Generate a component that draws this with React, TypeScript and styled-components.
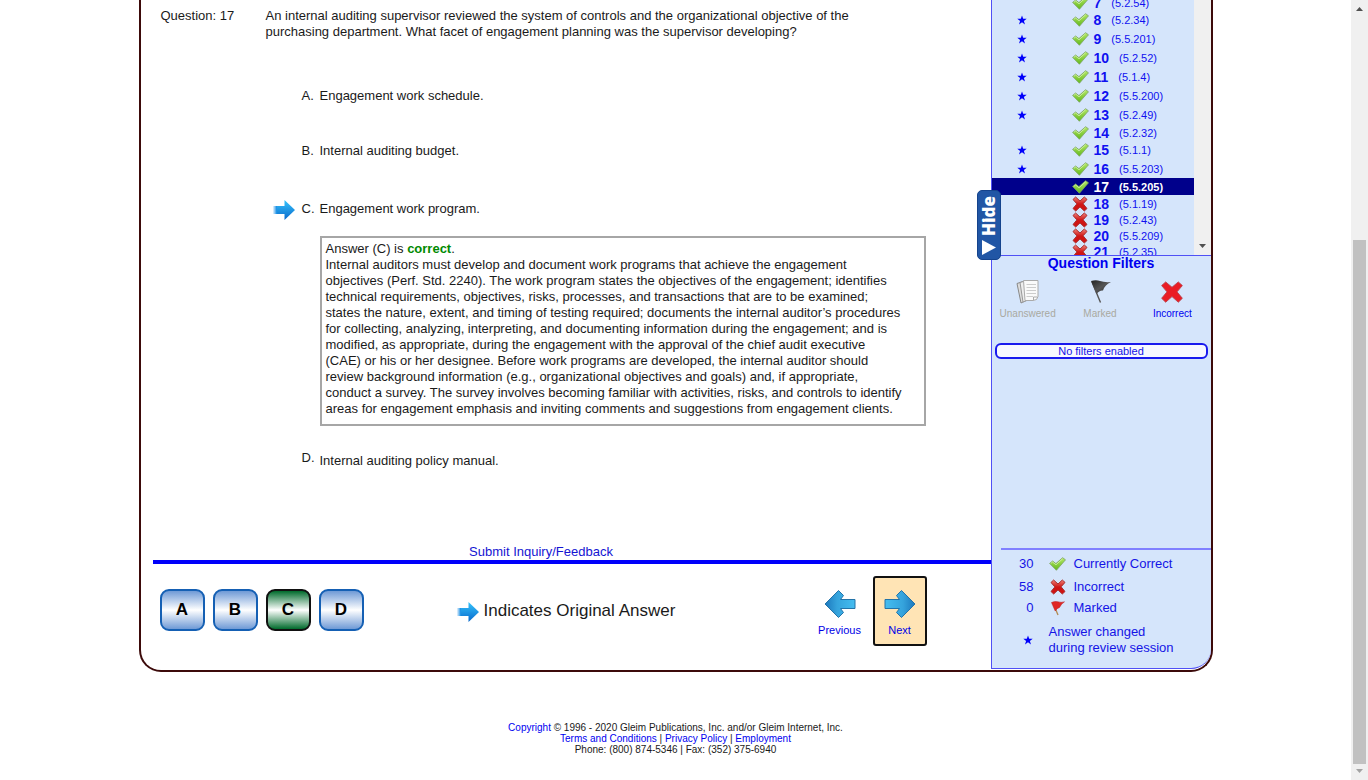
import React from "react";
import styled, { createGlobalStyle, css } from "styled-components";

const GlobalStyle = createGlobalStyle`
  * { box-sizing: border-box; }
  body {
    margin: 0;
    background: #fff;
    color: #1a1a1a;
    font: 13px/16px "Liberation Sans", Arial, sans-serif;
  }
  button { font: inherit; color: inherit; background: none; border: 0; padding: 0; cursor: pointer; }
  a { color: #1414d2; text-decoration: none; }
  p, h2, ul, ol { margin: 0; padding: 0; list-style: none; font-weight: normal; }
  svg { display: block; flex: none; }
`;

const Page = styled.div`
  display: grid;
  grid-template-columns: minmax(0, 1fr) 17px;
  min-height: 100vh;
`;

const Column = styled.div`
  display: flex;
  flex-direction: column;
  align-items: center;
`;

const Card = styled.div`
  display: flex;
  width: 100%;
  max-width: 1074px;
  border: 2px solid #3c0a0a;
  border-top: 0;
  border-radius: 0 0 22px 22px;
`;

const Main = styled.main`
  flex: 1;
  min-width: 0;
  display: flex;
  flex-direction: column;
  padding-left: 12px;
`;

const Question = styled.section`
  display: grid;
  grid-template-columns: 105px minmax(0, 610px);
  padding: 8px 0 0 8px;
`;

const Options = styled.ol`
  display: flex;
  flex-direction: column;
  padding: 48px 65px 0 120px;
`;

const Option = styled.li<{ $gap?: number }>`
  display: grid;
  grid-template: 16px / 29px 18px minmax(0, 1fr);
  align-items: center;
  margin-bottom: ${(p) => p.$gap ?? 0}px;
`;

const Letter = styled.span<{ $raised?: boolean }>`
  padding-bottom: ${(p) => (p.$raised ? 6 : 0)}px;
`;

const Explanation = styled.li`
  margin: 0 0 27px 47px;
  padding: 3px 4px 7px;
  border: 2px solid #a6a6a6;
`;

const Correct = styled.b`
  color: #008a00;
`;

const Feedback = styled.div`
  display: flex;
  justify-content: center;
  padding: 75px 61px 0 0;
  border-bottom: 4px solid #0000fa;
`;

const Controls = styled.div`
  display: flex;
  align-items: center;
  padding: 12px 64px 24px 7px;
`;

const Answers = styled.div`
  display: flex;
  gap: 8px;
  padding-bottom: 2px;
`;

const AnswerButton = styled.button<{ $chosen?: boolean }>`
  width: 45px;
  height: 42px;
  border: 2px solid ${(p) => (p.$chosen ? "#111" : "#1560b4")};
  border-radius: 9px;
  font-size: 17px;
  font-weight: bold;
  color: #000;
  background: ${(p) =>
    p.$chosen
      ? "linear-gradient(#006b2c, #fff 50%, #006b2c)"
      : "linear-gradient(#6f9ad6, #fff 50%, #6f9ad6)"};
`;

const Legend = styled.div`
  display: flex;
  align-items: center;
  gap: 5px;
  margin-left: 93px;
  font-size: 17px;
`;

const Pager = styled.div`
  display: flex;
  gap: 6px;
  margin-left: auto;
`;

const PageButton = styled.button<{ $active?: boolean }>`
  display: flex;
  flex-direction: column;
  align-items: center;
  gap: 3px;
  width: 54px;
  height: 70px;
  padding-top: 11px;
  font-size: 11px;
  color: #0000e6;
  border: 2px solid transparent;
  border-radius: 3px;
  ${(p) => p.$active && css`background: #ffe4b5; border-color: #111;`}
`;

const Side = styled.aside`
  position: relative;
  flex: none;
  display: flex;
  flex-direction: column;
  width: 220px;
  margin-bottom: 1px;
  background: #d5e5fb;
  border: 1px solid #5050f5;
  border-top: 0;
  border-right: 0;
  border-radius: 0 0 20px 0;
  color: #1414e6;
`;

const ListFrame = styled.div`
  display: grid;
  grid-template: 255px / minmax(0, 1fr) 17px;
  overflow: hidden;
  border-bottom: 1px solid #5050f5;
`;

const List = styled.ul`
  margin-top: -6px;
`;

const Row = styled.button<{ $kind: "star" | "plain" | "selected" }>`
  display: grid;
  grid-template-columns: 52px 19px auto 1fr;
  align-items: center;
  width: 100%;
  height: ${(p) => ({ star: 19, plain: 16, selected: 17 })[p.$kind]}px;
  padding-left: 25px;
  text-align: left;
  color: #1010f0;
  column-gap: 3px;
  ${(p) => p.$kind === "selected" && css`background: #00008b; color: #fff; font-weight: bold;`}
`;

const Num = styled.b`
  font-size: 14px;
  padding-right: 7px;
`;

const Code = styled.span`
  font-size: 11px;
  padding-top: 1px;
`;

const ListBar = styled.div`
  display: flex;
  align-items: flex-end;
  justify-content: center;
  padding-bottom: 7px;
  background: #f0f0f0;
`;

const HideTab = styled.button`
  position: absolute;
  left: -15px;
  top: 190px;
  display: flex;
  flex-direction: column;
  align-items: center;
  justify-content: center;
  gap: 4px;
  width: 24px;
  height: 70px;
  border-radius: 5px;
  background: #2156a5;
  border: 1px solid #15438c;
  color: #fff;
`;

const HideLabel = styled.span`
  writing-mode: vertical-rl;
  rotate: 180deg;
  font: 800 17px/20px "Open Sans", "Noto Sans", sans-serif;
`;

const Heading = styled.h2`
  text-align: center;
  font-size: 14px;
  line-height: 14px;
  font-weight: bold;
  color: #0000f0;
`;

const Filters = styled.div`
  display: grid;
  grid-template-columns: repeat(3, 1fr);
  padding: 8px 2px 0 0;
`;

const Filter = styled.button<{ $off?: boolean }>`
  display: flex;
  flex-direction: column;
  align-items: center;
  gap: 0;
  font-size: 10px;
  color: ${(p) => (p.$off ? "#a9a9a0" : "#0000f0")};
`;

const Status = styled.p`
  margin: 21px 3px 0;
  border: 2px solid #1a1aee;
  border-radius: 6px;
  background: #f8f8ff;
  text-align: center;
  font-size: 11px;
  line-height: 12px;
`;

const Totals = styled.ul`
  margin: auto 0 0 9px;
  padding: 2px 0 12px;
  border-top: 2px solid #8080ff;
`;

const Total = styled.li<{ $height: number }>`
  display: grid;
  grid-template-columns: 33px 24px 1fr;
  column-gap: 8px;
  align-items: center;
  height: ${(p) => p.$height}px;
  span:first-child { text-align: right; }
  svg { justify-self: end; }
`;

const Changed = styled.li`
  display: grid;
  grid-template-columns: 26px 1fr;
  align-items: center;
  padding: 6px 0 0 22px;
`;

const Footer = styled.footer`
  margin-top: 50px;
  text-align: center;
  font-size: 10px;
  line-height: 11px;
  a { color: #0000f0; }
`;

const PageBar = styled.div`
  display: flex;
  flex-direction: column;
  align-items: center;
  justify-content: space-between;
  padding: 7px 0;
  background: #f0f0f0;
`;

const PageThumb = styled.div`
  flex: 1;
  width: 13px;
  margin: 229px 0 5px;
  background: #c1c1c1;
`;

const Tick = () => (
  <svg width="17" height="14" viewBox="0 0 17 14" aria-hidden="true">
    <defs>
      <linearGradient id="tick" x1="0" y1="0" x2="0" y2="1">
        <stop offset="0" stopColor="#b4e866" />
        <stop offset="1" stopColor="#62b81c" />
      </linearGradient>
    </defs>
    <path d="M.6 6.4 3.6 4 6.900 6.600 13.6.7 16.500 2.8 7.400 13.300Z" fill="url(#tick)" stroke="#7ba365" strokeWidth=".8" strokeLinejoin="round" />
    <path d="M1.800 6.400 3.600 5 7 7.800 13.600 1.800" fill="none" stroke="#e0f8bd" strokeWidth=".7" />
  </svg>
);

const crossPath = "M1 3.5 3.6 1 8 5 12.3 1 15 3.4 11.1 7.8 15 12.5 12.3 15 8 10.9 3.7 15 1 12.5 4.9 7.9Z";

const Cross = () => (
  <svg width="16" height="16" viewBox="0 0 16 16" aria-hidden="true">
    <defs>
      <linearGradient id="cross" x1="0" y1="0" x2="0" y2="1">
        <stop offset="0" stopColor="#f08078" />
        <stop offset=".5" stopColor="#cf1616" />
        <stop offset="1" stopColor="#d01010" />
      </linearGradient>
    </defs>
    <path d={crossPath} fill="url(#cross)" stroke="#a83030" strokeLinejoin="round" />
  </svg>
);

const BigCross = () => (
  <svg width="26" height="28" viewBox="-1 -2 18 20" aria-hidden="true">
    <path d="M.6 3.4 3.5.8 8 4.600 12.500.8 15.400 3.400 11.600 7.900 15.400 12.500 12.500 15.300 8 11.300 3.500 15.300.6 12.500 4.400 7.900Z" fill="#ea1c24" stroke="#b5404a" strokeWidth=".6" strokeLinejoin="round" />
  </svg>
);

const Star = () => (
  <svg width="10" height="10" viewBox="0 0 10 10" aria-hidden="true">
    <path d="M5 .4 6.2 3.8H9.7L6.9 5.9 8 9.4 5 7.3 2 9.4 3.1 5.9.3 3.8H3.8Z" fill="#0000fa" />
  </svg>
);

const Papers = () => (
  <svg width="26" height="28" viewBox="0 0 26 28" aria-hidden="true">
    <path d="M2 5.500 8 3.500 12 22 6 25Z" fill="#ddd" stroke="#888" />
    <path d="M5 4.500 10 3 13 22 8 24Z" fill="#eee" stroke="#999" />
    <path d="M8.500 2.500H23V18.500Q22.500 22.500 18 22.500H10Z" fill="#fafafa" stroke="#aaa" />
    <path d="M11.500 6.500H21M11.500 9.500H21M11.500 12.500H21M11.500 15.500H21M11.500 18.500H18" stroke="#ccc" />
    <path d="M18.500 22V19H22.500" fill="none" stroke="#aaa" />
  </svg>
);

const BlackFlag = () => (
  <svg width="26" height="28" viewBox="0 0 26 28" aria-hidden="true">
    <defs>
      <linearGradient id="flag" x1="0" y1="0" x2="1" y2="1">
        <stop offset="0" stopColor="#222" />
        <stop offset=".5" stopColor="#555" />
        <stop offset="1" stopColor="#222" />
      </linearGradient>
    </defs>
    <path d="M5 4 13.5 24.500" stroke="#555" strokeWidth="1.400" />
    <path d="M4 3Q9 1.500 13 3T24 4Q18 6.500 16 12.500Q12.500 12 9.500 16Z" fill="url(#flag)" />
  </svg>
);

const RedFlag = () => (
  <svg width="16" height="16" viewBox="0 0 16 16" aria-hidden="true">
    <path d="M3 3 8 15" stroke="#b28a52" strokeWidth="1.300" />
    <path d="M1.500 2.500Q5 .800 8 1.800T14.500 1.800Q11 4 9.500 7.500Q7 8 5.200 11Z" fill="#e02626" stroke="#b92020" strokeWidth=".5" />
  </svg>
);

const OriginalArrow = () => (
  <svg width="22" height="22" viewBox="0 0 22 22" aria-hidden="true">
    <defs>
      <linearGradient id="orig" x1="0" y1="0" x2="0" y2="1">
        <stop offset="0" stopColor="#35c3fb" />
        <stop offset="1" stopColor="#0868cc" />
      </linearGradient>
      <linearGradient id="tail" x1="0" y1="0" x2="1" y2="0">
        <stop offset="0" stopColor="#2a94e6" stopOpacity=".1" />
        <stop offset=".3" stopColor="#1c92e6" />
      </linearGradient>
    </defs>
    <path d="M0 8H12V16H0Z" fill="url(#tail)" />
    <path d="M11.500 2 22 12 11.500 22V16H4V8H11.500Z" fill="url(#orig)" />
  </svg>
);

const NavArrow = ({ back }: { back?: boolean }) => (
  <svg width="32" height="30" viewBox="0 0 32 30" aria-hidden="true">
    <defs>
      <linearGradient id={back ? "navBack" : "navNext"} x1={back ? "1" : "0"} y1="0" x2={back ? "0" : "1"} y2="0">
        <stop offset="0" stopColor="#45bdf0" />
        <stop offset=".6" stopColor="#35a3dc" />
        <stop offset="1" stopColor="#1c78bd" />
      </linearGradient>
    </defs>
    <path
      d={back
        ? "M1 15 14.500 1.500 19.500 6.500 16.500 10.500H31V19.500H16.500L19.500 23.500 14.500 28.500Z"
        : "M31 15 17.500 1.500 12.500 6.500 15.500 10.500H1V19.500H15.500L12.500 23.500 17.500 28.500Z"}
      fill={`url(#${back ? "navBack" : "navNext"})`}
      stroke="#2373a8"
    />
  </svg>
);

const Caret = ({ up, color }: { up?: boolean; color: string }) => (
  <svg width="7" height="4" viewBox="0 0 7 4" aria-hidden="true">
    <path d={up ? "M0 4 3.500 0 7 4Z" : "M0 0H7L3.500 4Z"} fill={color} />
  </svg>
);

type Item = { n: number; code: string; star?: boolean; wrong?: boolean; selected?: boolean };

const items: Item[] = [
  { n: 7, code: "5.2.54" },
  { n: 8, code: "5.2.34", star: true },
  { n: 9, code: "5.5.201", star: true },
  { n: 10, code: "5.2.52", star: true },
  { n: 11, code: "5.1.4", star: true },
  { n: 12, code: "5.5.200", star: true },
  { n: 13, code: "5.2.49", star: true },
  { n: 14, code: "5.2.32" },
  { n: 15, code: "5.1.1", star: true },
  { n: 16, code: "5.5.203", star: true },
  { n: 17, code: "5.5.205", selected: true },
  { n: 18, code: "5.1.19", wrong: true },
  { n: 19, code: "5.2.43", wrong: true },
  { n: 20, code: "5.5.209", wrong: true },
  { n: 21, code: "5.2.35", wrong: true },
];

export default function App() {
  return (
    <Page>
      <GlobalStyle />
      <Column>
        <Card>
          <Main>
            <Question>
              <span>Question: 17</span>
              <p>
                An internal auditing supervisor reviewed the system of controls and the organizational objective of the
                <br />
                purchasing department. What facet of engagement planning was the supervisor developing?
              </p>
            </Question>
            <Options>
              <Option $gap={39}><span /><Letter>A.</Letter><span>Engagement work schedule.</span></Option>
              <Option $gap={42}><span /><Letter>B.</Letter><span>Internal auditing budget.</span></Option>
              <Option $gap={19}><OriginalArrow /><Letter>C.</Letter><span>Engagement work program.</span></Option>
              <Explanation>
                Answer (C) is <Correct>correct</Correct>.<br />
                Internal auditors must develop and document work programs that achieve the engagement<br />
                objectives (Perf. Std. 2240). The work program states the objectives of the engagement; identifies<br />
                technical requirements, objectives, risks, processes, and transactions that are to be examined;<br />
                states the nature, extent, and timing of testing required; documents the internal auditor’s procedures<br />
                for collecting, analyzing, interpreting, and documenting information during the engagement; and is<br />
                modified, as appropriate, during the engagement with the approval of the chief audit executive<br />
                (CAE) or his or her designee. Before work programs are developed, the internal auditor should<br />
                review background information (e.g., organizational objectives and goals) and, if appropriate,<br />
                conduct a survey. The survey involves becoming familiar with activities, risks, and controls to identify<br />
                areas for engagement emphasis and inviting comments and suggestions from engagement clients.
              </Explanation>
              <Option><span /><Letter $raised>D.</Letter><span>Internal auditing policy manual.</span></Option>
            </Options>
            <Feedback><a href="#feedback">Submit Inquiry/Feedback</a></Feedback>
            <Controls>
              <Answers>
                <AnswerButton>A</AnswerButton>
                <AnswerButton>B</AnswerButton>
                <AnswerButton $chosen>C</AnswerButton>
                <AnswerButton>D</AnswerButton>
              </Answers>
              <Legend><OriginalArrow />Indicates Original Answer</Legend>
              <Pager>
                <PageButton><NavArrow back />Previous</PageButton>
                <PageButton $active><NavArrow />Next</PageButton>
              </Pager>
            </Controls>
          </Main>
          <Side>
            <ListFrame>
              <List>
                {items.map((i) => (
                  <li key={i.n}>
                    <Row $kind={i.selected ? "selected" : i.star ? "star" : "plain"}>
                      <span>{i.star && <Star />}</span>
                      {i.wrong ? <Cross /> : <Tick />}
                      <Num>{i.n}</Num>
                      <Code>({i.code})</Code>
                    </Row>
                  </li>
                ))}
              </List>
              <ListBar><Caret color="#505050" /></ListBar>
            </ListFrame>
            <Heading>Question Filters</Heading>
            <Filters>
              <Filter $off><Papers />Unanswered</Filter>
              <Filter $off><BlackFlag />Marked</Filter>
              <Filter><BigCross />Incorrect</Filter>
            </Filters>
            <Status>No filters enabled</Status>
            <Totals>
              <Total $height={24}><span>30</span><Tick /><span>Currently Correct</span></Total>
              <Total $height={22}><span>58</span><Cross /><span>Incorrect</span></Total>
              <Total $height={20}><span>0</span><RedFlag /><span>Marked</span></Total>
              <Changed><Star /><span>Answer changed<br />during review session</span></Changed>
            </Totals>
            <HideTab>
              <HideLabel>Hide</HideLabel>
              <svg width="14" height="15" viewBox="0 0 14 15" aria-hidden="true"><path d="M0 0 14 7.500 0 15Z" fill="#fff" /></svg>
            </HideTab>
          </Side>
        </Card>
        <Footer>
          <a href="#copyright">Copyright</a> © 1996 - 2020 Gleim Publications, Inc. and/or Gleim Internet, Inc.<br />
          <a href="#terms">Terms and Conditions</a> | <a href="#privacy">Privacy Policy</a> | <a href="#employment">Employment</a><br />
          Phone: (800) 874-5346 | Fax: (352) 375-6940
        </Footer>
      </Column>
      <PageBar>
        <Caret up color="#505050" />
        <PageThumb />
        <Caret color="#a3a3a3" />
      </PageBar>
    </Page>
  );
}
